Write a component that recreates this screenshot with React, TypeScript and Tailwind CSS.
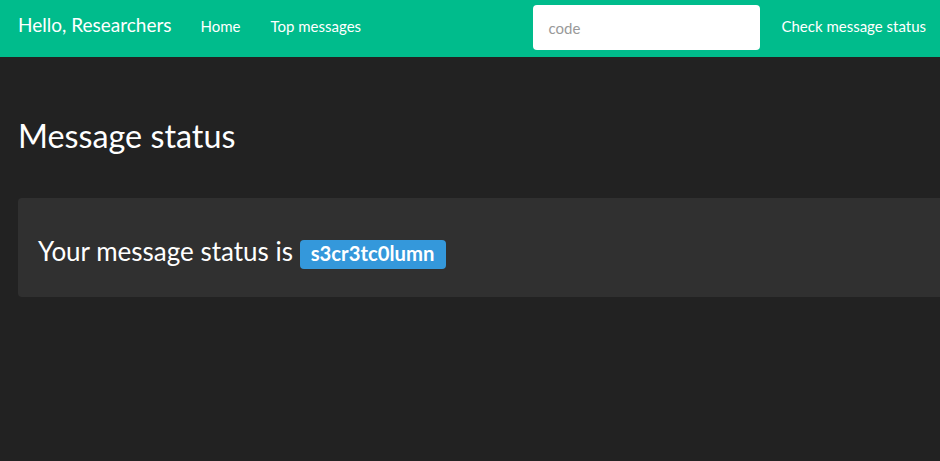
import React from "react";

export default function App() {
  return (
    <div className="min-h-[461px] bg-[#222222] text-white font-['Lato','Liberation_Sans',sans-serif] overflow-hidden">
      <nav className="h-[57px] bg-[#00bc8c] flex items-start">
        <a className="pl-[18px] pr-[15px] pt-[15px] text-[19px] leading-[20px]">Hello, Researchers</a>
        <a className="pl-[14px] pr-[15px] pt-[16px] text-[15px] leading-[20px]">Home</a>
        <a className="px-[15px] pt-[16px] text-[15px] leading-[20px]">Top messages</a>
        <div className="ml-auto flex items-start">
          <input
            placeholder="code"
            className="mt-[5px] w-[227px] h-[45px] bg-white rounded-[4px] px-[15px] text-[15px] text-[#222] placeholder:text-[#999] outline-none"
          />
          <a className="pl-[21px] pr-[14px] pt-[16px] text-[15px] leading-[20px]">Check message status</a>
        </div>
      </nav>

      <main className="pl-[18px] w-[1100px]">
        <h1 className="mt-[61px] text-[32.3px] leading-[1.1] font-normal">Message status</h1>
        <div className="mt-[44px] bg-[#303030] rounded-[4px] px-[20px] pt-[19px] h-[99px]">
          <h3 className="mt-[20px] text-[26px] leading-[28.6px] font-normal">
            Your message status is{" "}
            <span className="inline-block align-baseline bg-[#3498db] rounded-[4px] text-[20.3px] font-bold leading-[20px] pl-[11px] pr-[12px] pt-[3px] pb-[6px]">
              s3cr3tc0lumn
            </span>
          </h3>
        </div>
      </main>
    </div>
  );
}
